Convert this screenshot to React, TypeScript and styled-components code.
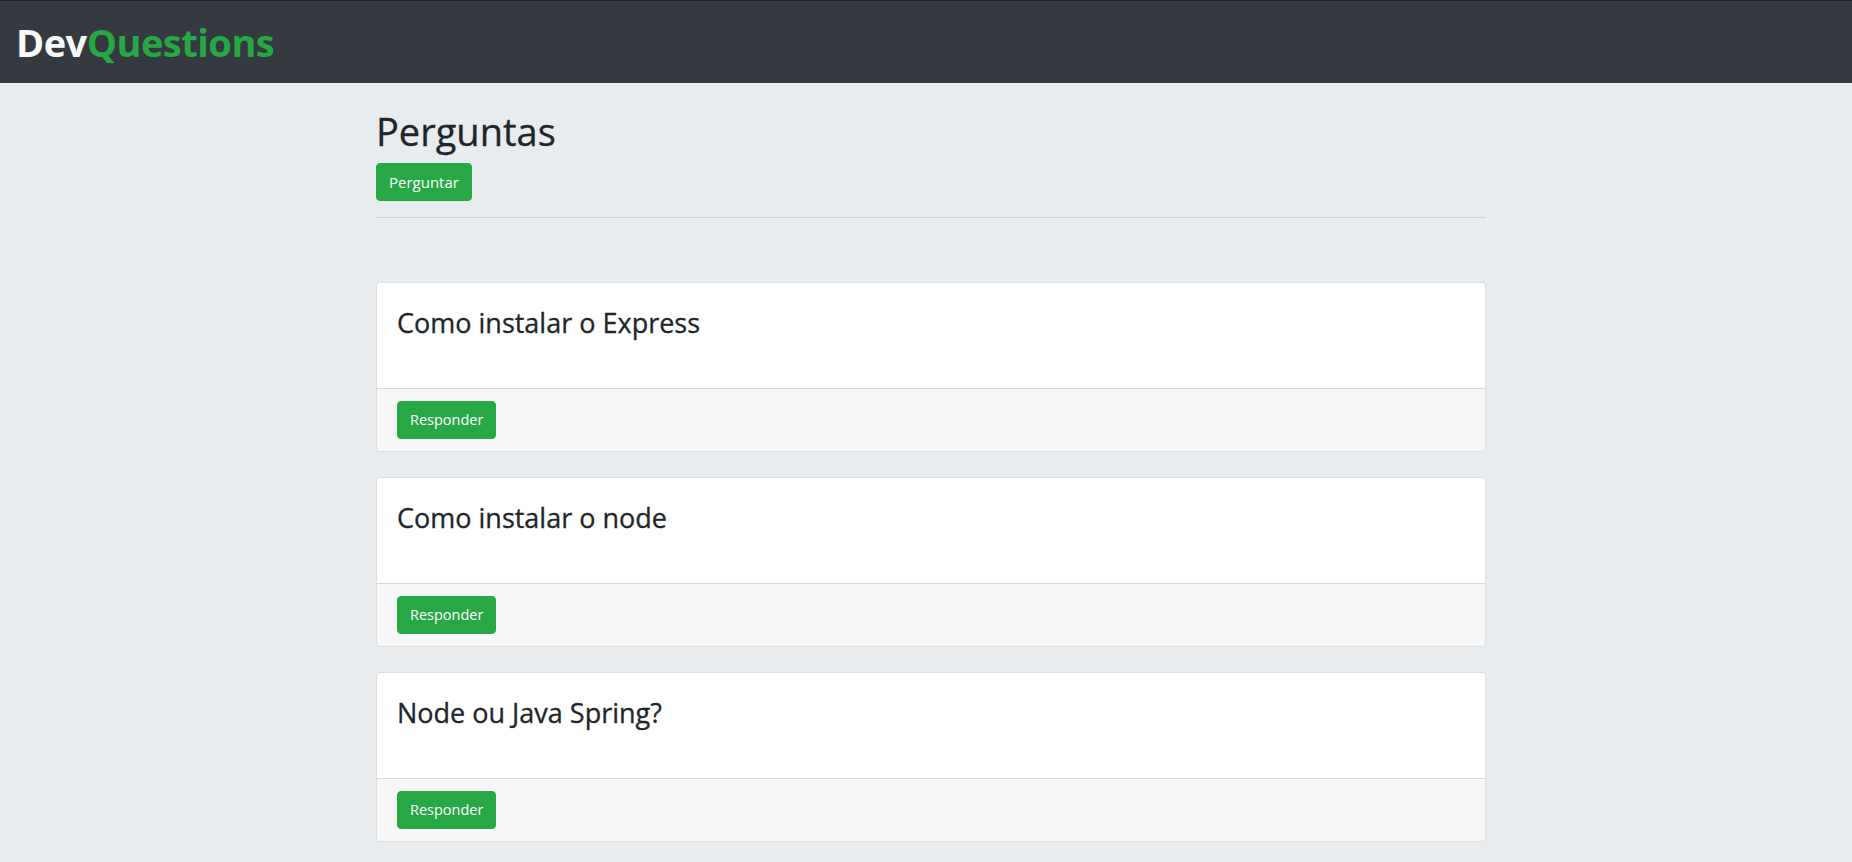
import React from "react";
import styled, { createGlobalStyle } from "styled-components";

const GlobalStyle = createGlobalStyle`
  body {
    margin: 0;
    background: #e9ecef;
    color: #212529;
    font-family: "Open Sans", "Noto Sans", sans-serif;
  }
`;

const Navbar = styled.nav`
  display: flex;
  align-items: center;
  height: 82px;
  padding: 0 16px;
  background: #343a40;
  border-top: 1px solid #1d2126;
`;

const Brand = styled.a`
  font-size: 38px;
  font-weight: 700;
  color: #f8f9fa;
  text-decoration: none;
  letter-spacing: -0.5px;
`;

const Accent = styled.span`
  color: #28a745;
`;

const Main = styled.main`
  padding-left: 10px;
`;

const Container = styled.div`
  width: 1110px;
  margin: 0 auto;
  padding-bottom: 21px;
`;

const Title = styled.h1`
  margin: 26px 0 8px;
  font-size: 38px;
  font-weight: 500;
  line-height: 1.2;
  -webkit-text-stroke: 0.3px #212529;
`;

const Button = styled.button`
  display: inline-block;
  height: 38px;
  padding: 0 12px;
  border: 1px solid #28a745;
  border-radius: 4px;
  background: #28a745;
  color: #fff;
  font-family: inherit;
  font-size: ${(p: { small?: boolean }) => (p.small ? "14.5px" : "15px")};
  cursor: pointer;
`;

const Divider = styled.hr`
  margin: 16px 0 0;
  border: 0;
  border-top: 1px solid rgba(0, 0, 0, 0.1);
`;

const QuestionList = styled.div`
  display: flex;
  flex-direction: column;
  gap: 25px;
  margin-top: 64px;
`;

const Card = styled.div`
  background: #fff;
  border: 1px solid rgba(0, 0, 0, 0.125);
  border-radius: 4px;
  overflow: hidden;
`;

const CardBody = styled.div`
  height: 105px;
  padding: 20px;
  box-sizing: border-box;
`;

const CardTitle = styled.h3`
  margin: 0;
  font-size: 27px;
  font-weight: 500;
  line-height: 1.5;
  -webkit-text-stroke: 0.3px #212529;
`;

const CardFooter = styled.div`
  padding: 12px 20px;
  background: rgba(0, 0, 0, 0.03);
  border-top: 1px solid rgba(0, 0, 0, 0.125);
`;

const questions = ["Como instalar o Express", "Como instalar o node", "Node ou Java Spring?"];

export default function App() {
  return (
    <>
      <GlobalStyle />
      <Navbar>
        <Brand href="#">
          Dev<Accent>Questions</Accent>
        </Brand>
      </Navbar>
      <Main>
        <Container>
          <Title>Perguntas</Title>
          <Button>Perguntar</Button>
          <Divider />
          <QuestionList>
            {questions.map((q) => (
              <Card key={q}>
                <CardBody>
                  <CardTitle>{q}</CardTitle>
                </CardBody>
                <CardFooter>
                  <Button small>Responder</Button>
                </CardFooter>
              </Card>
            ))}
          </QuestionList>
        </Container>
      </Main>
    </>
  );
}
